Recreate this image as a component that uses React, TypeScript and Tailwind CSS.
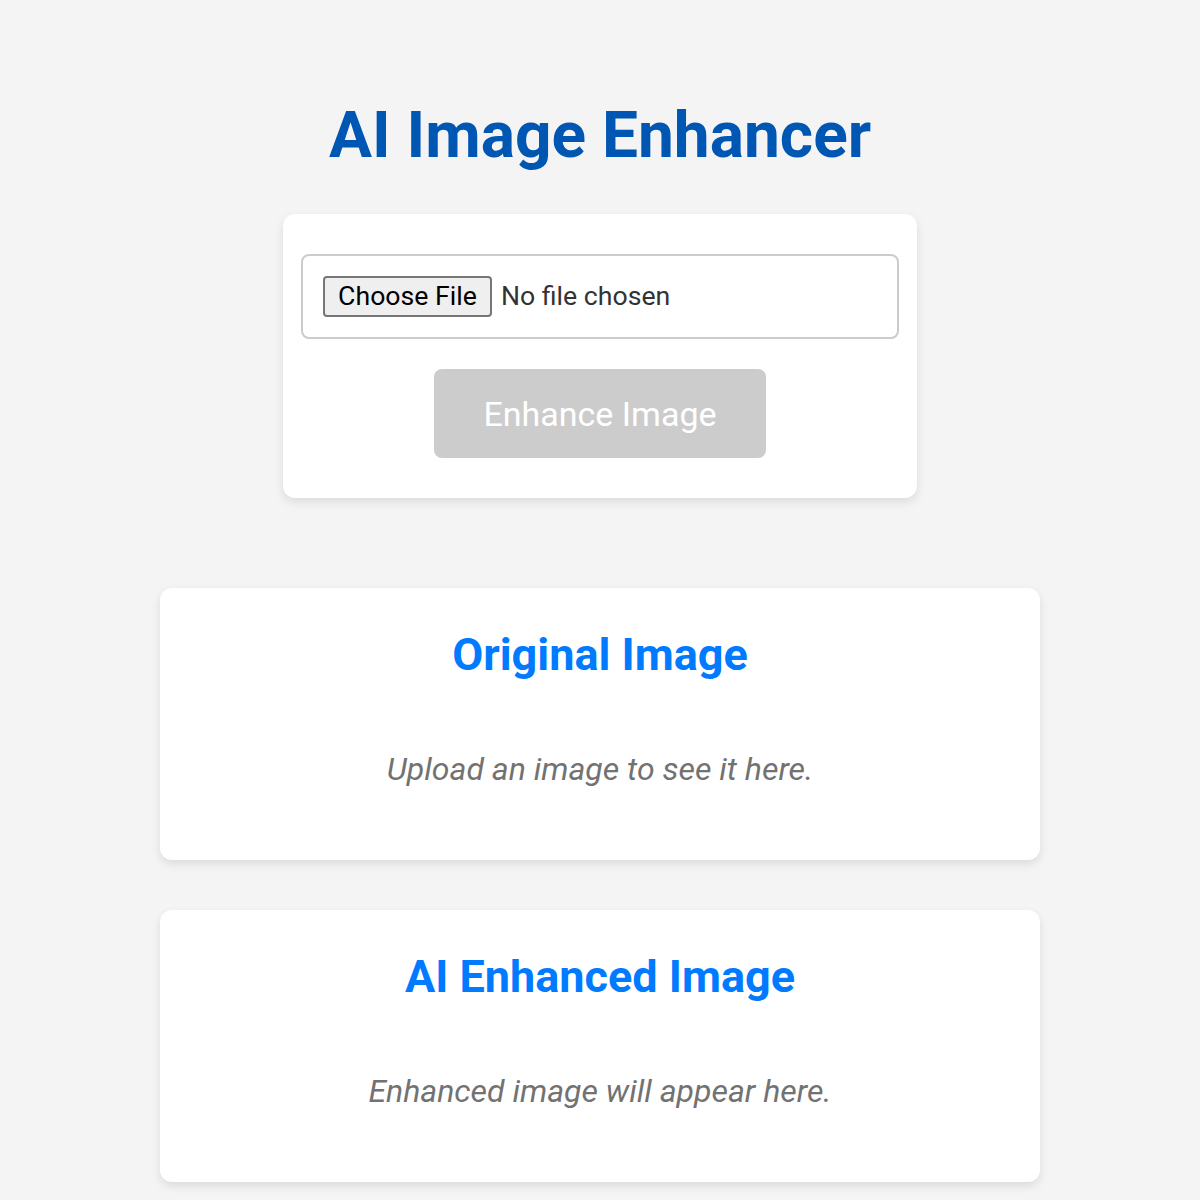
import React from "react";

const font = { fontFamily: "Roboto, 'Noto Sans', sans-serif" };

const ResultCard = ({ title, hint }: { title: string; hint: string }) => (
  <section className="w-[880px] rounded-[12px] bg-white pt-[44px] pb-[75px] text-center shadow-[0_4px_10px_rgba(0,0,0,0.1)]">
    <h2 className="text-[45px] font-bold leading-none text-[#007bff]">{title}</h2>
    <p className="mt-[76px] text-[32px] italic leading-none text-[#727272]">{hint}</p>
  </section>
);

export default function App() {
  return (
    <div className="flex min-h-screen flex-col items-center bg-[#f4f4f4] pt-[104px] pb-10" style={font}>
      <h1 className="text-[64px] font-bold leading-none text-[#0056b3]">AI Image Enhancer</h1>

      {/* Upload panel */}
      <div className="mt-[46px] w-[634px] rounded-[12px] bg-white px-[18px] py-10 shadow-[0_4px_10px_rgba(0,0,0,0.1)]">
        <div className="flex h-[85px] items-center gap-[9px] rounded-[8px] border-2 border-[#cccccc] px-5">
          <button className="h-[41px] w-[169px] rounded-[4px] border-2 border-[#767676] bg-[#efefef] text-[26.67px] leading-none text-black">
            Choose File
          </button>
          <span className="text-[26.67px] leading-none text-[#333333]">No file chosen</span>
        </div>
        <div className="mt-[30px] flex justify-center">
          <button
            disabled
            className="h-[89px] w-[332px] rounded-[8px] bg-[#cccccc] text-[34px] leading-none text-white"
          >
            Enhance Image
          </button>
        </div>
      </div>

      <div className="mt-[90px] flex flex-col gap-[50px]">
        <ResultCard title="Original Image" hint="Upload an image to see it here." />
        <ResultCard title="AI Enhanced Image" hint="Enhanced image will appear here." />
      </div>
    </div>
  );
}
